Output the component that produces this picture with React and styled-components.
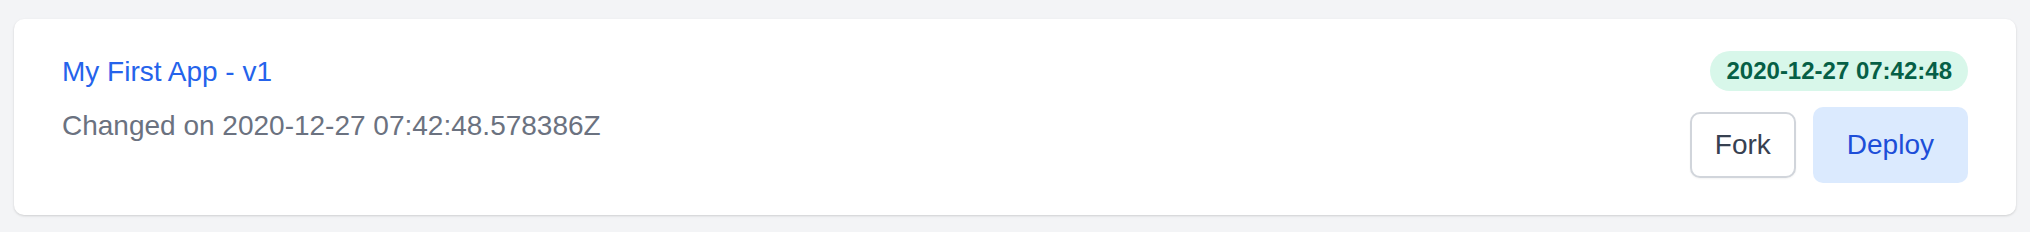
import React from "react";
import styled, { createGlobalStyle } from "styled-components";

const GlobalStyle = createGlobalStyle`
  html, body { margin: 0; padding: 0; background: #f3f4f6; }
  body { font-family: "Liberation Sans", Arial, sans-serif; }
  * { box-sizing: border-box; }
`;

const Page = styled.div`
  padding: 19px 14px 17px 14px;
`;

const Card = styled.div`
  background: #ffffff;
  border-radius: 10px;
  box-shadow: 0 1px 3px rgba(0, 0, 0, 0.1), 0 1px 2px rgba(0, 0, 0, 0.06);
  padding: 32px 48px;
  display: flex;
  justify-content: space-between;
  align-items: flex-start;
`;

const Info = styled.div`
  display: flex;
  flex-direction: column;
  gap: 12px;
`;

const Title = styled.a`
  font-size: 28px;
  line-height: 42px;
  color: #2563eb;
  text-decoration: none;
`;

const Meta = styled.div`
  font-size: 28px;
  line-height: 42px;
  color: #6b7280;
`;

const Side = styled.div`
  display: flex;
  flex-direction: column;
  align-items: flex-end;
  gap: 16px;
`;

const Badge = styled.span`
  display: inline-flex;
  align-items: center;
  height: 40px;
  padding: 0 16px;
  border-radius: 9999px;
  background: #d8f7ea;
  color: #065f46;
  font-size: 24px;
  font-weight: 700;
`;

const Actions = styled.div`
  display: flex;
  align-items: center;
  gap: 17px;
`;

const Button = styled.button`
  font-family: "Liberation Sans", Arial, sans-serif;
  font-size: 28px;
  border-radius: 10px;
  cursor: pointer;
  display: inline-flex;
  align-items: center;
  justify-content: center;
  ${(p) =>
    p.$primary
      ? `
    height: 76px;
    padding: 0 34px;
    background: #dbeafe;
    color: #1d4ed8;
    border: none;
  `
      : `
    height: 66px;
    padding: 0 23px;
    background: #ffffff;
    color: #374151;
    border: 2px solid #d1d5db;
    box-shadow: 0 1px 2px rgba(0, 0, 0, 0.05);
  `}
`;

export default function App() {
  return (
    <>
      <GlobalStyle />
      <Page>
        <Card>
          <Info>
            <Title href="#">My First App - v1</Title>
            <Meta>Changed on 2020-12-27 07:42:48.578386Z</Meta>
          </Info>
          <Side>
            <Badge>2020-12-27 07:42:48</Badge>
            <Actions>
              <Button>Fork</Button>
              <Button $primary>Deploy</Button>
            </Actions>
          </Side>
        </Card>
      </Page>
    </>
  );
}
